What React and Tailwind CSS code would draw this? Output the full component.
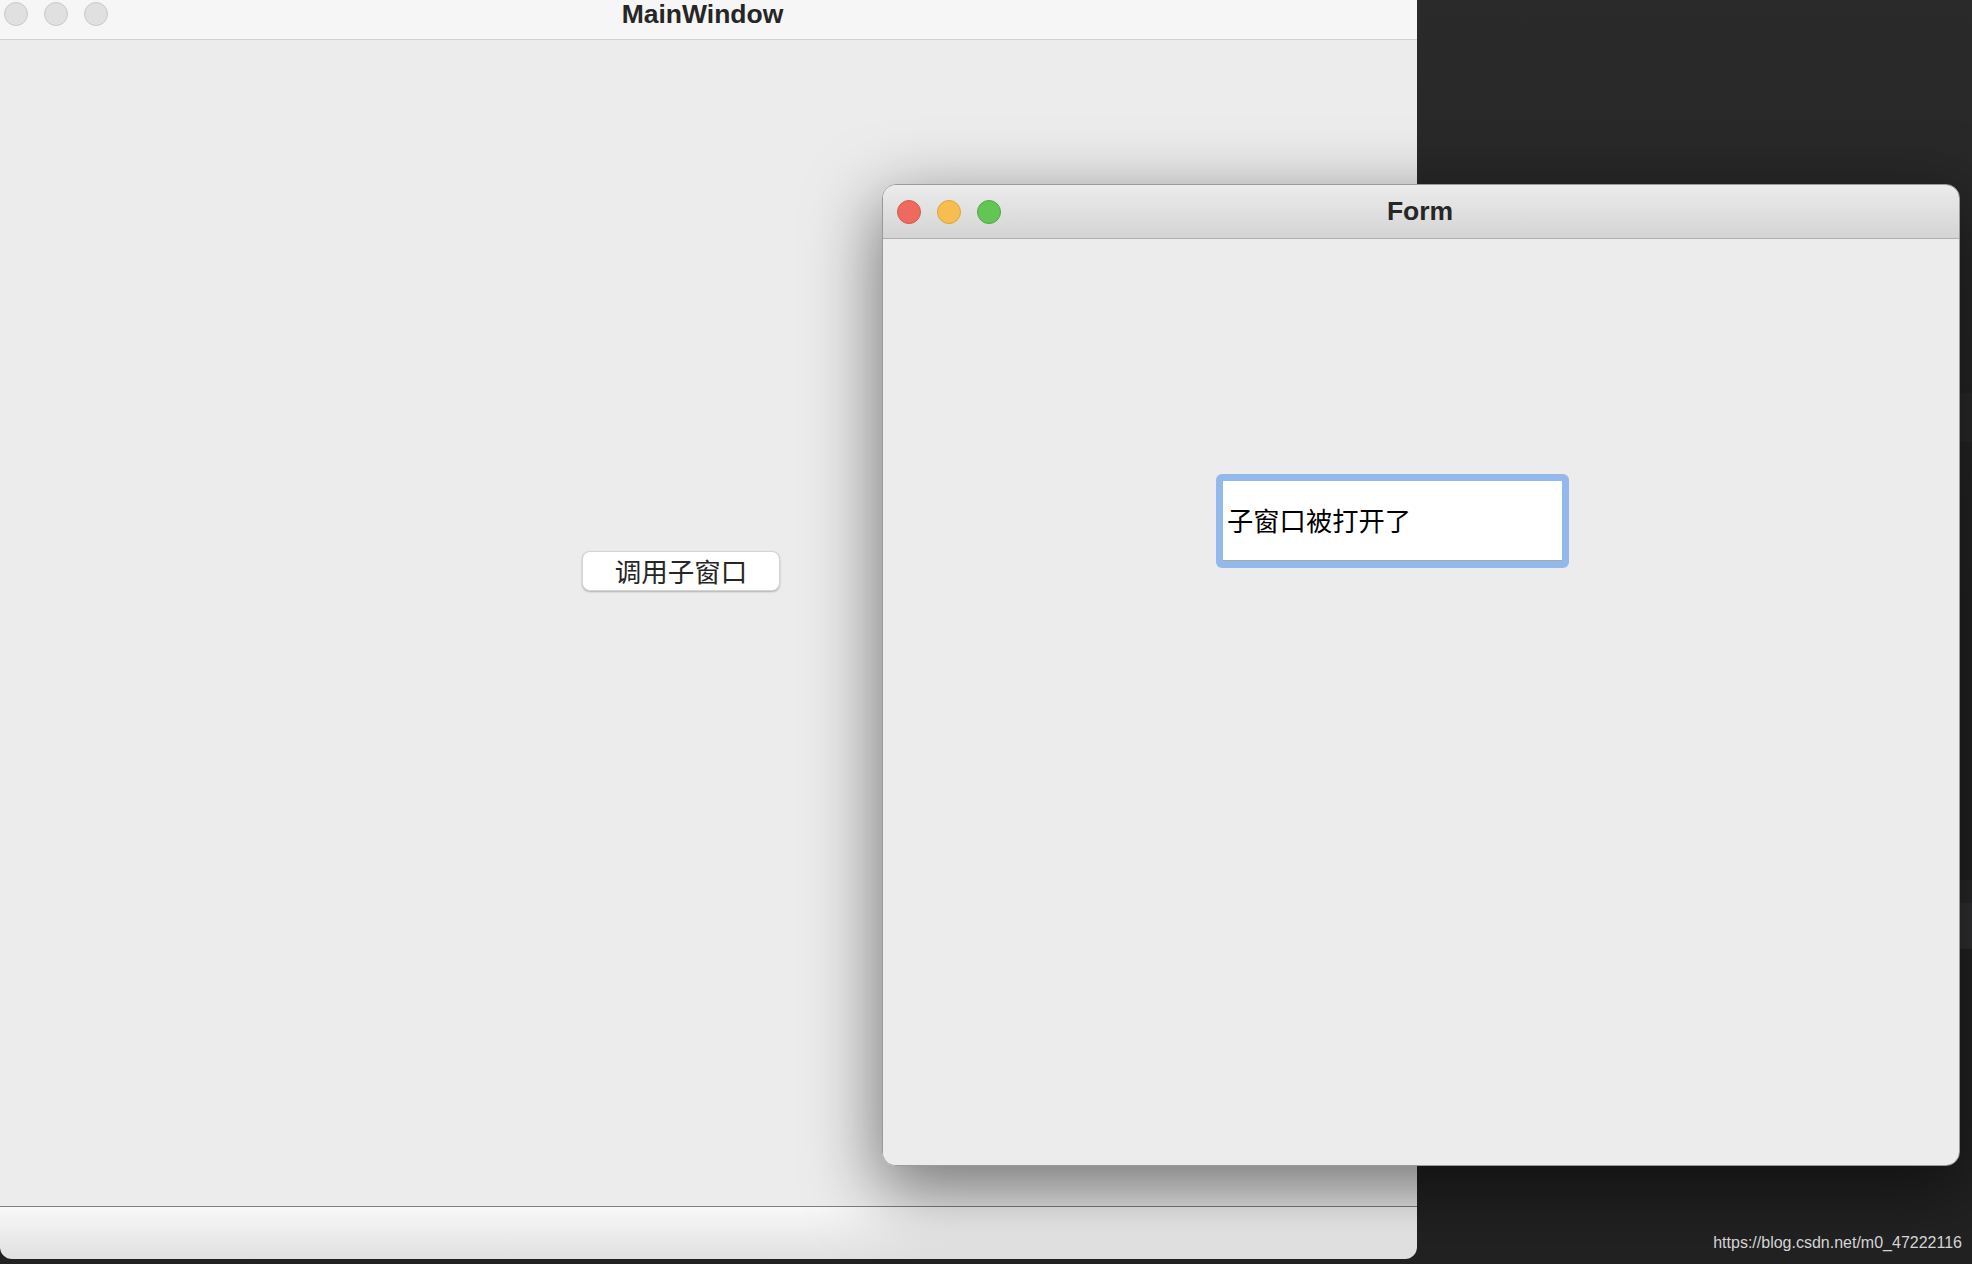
import React from "react";

const cjk = { fontFamily: '"Noto Sans CJK SC", "Liberation Sans", sans-serif' };
const sans = { fontFamily: '"Liberation Sans", "Noto Sans", sans-serif' };

const Light = ({ className }) => (
  <div className={`w-[24px] h-[24px] rounded-full border ${className}`} />
);

const MainWindow = () => {
  return (
    <div className="absolute left-0 top-0 w-[1417px] h-[1259px] flex flex-col rounded-b-[12px] overflow-hidden">
      {/* Title bar */}
      <div className="relative h-[40px] shrink-0 bg-[#f6f6f6] border-b border-[#d2d2d2]">
        <div className="flex items-center h-[28px] pl-[4px] gap-[16px]">
          <Light className="bg-[#e0e0e0] border-[#c9c9c9]" />
          <Light className="bg-[#e0e0e0] border-[#c9c9c9]" />
          <Light className="bg-[#e0e0e0] border-[#c9c9c9]" />
        </div>
        <div
          className="absolute left-0 right-0 top-0 h-[29px] flex items-center justify-center pr-[12px] text-[26.5px] leading-none font-bold text-[#262626]"
          style={sans}
        >
          MainWindow
        </div>
      </div>

      {/* Content */}
      <div className="flex-1 bg-[#ececec] pl-[582px] pt-[511px]">
        <button
          className="w-[198px] h-[40px] bg-white rounded-[8px] border border-[#d4d4d4] shadow-[0_1px_2px_rgba(0,0,0,0.25)] text-[26.5px] text-[#262626] flex items-center justify-center leading-none"
          style={cjk}
        >
          调用子窗口
        </button>
      </div>

      {/* Status bar */}
      <div className="h-[53px] shrink-0 border-t border-[#7f7f7f] bg-gradient-to-b from-[#f8f8f8] to-[#e1e1e1]" />
    </div>
  );
};

const FormWindow = () => {
  return (
    <div className="absolute left-[882px] top-[184px] w-[1078px] h-[982px] flex flex-col rounded-[14px] overflow-hidden border border-[#9a9a9a] shadow-[0_22px_70px_4px_rgba(0,0,0,0.5)]">
      {/* Title bar */}
      <div className="relative h-[54px] shrink-0 bg-gradient-to-b from-[#ececec] to-[#d4d4d4] border-b border-[#b0b0b0] flex items-center pl-[14px] gap-[16px]">
        <Light className="bg-[#ee6a5f] border-[#d4594d]" />
        <Light className="bg-[#f6be4f] border-[#dba43c]" />
        <Light className="bg-[#62c554] border-[#50a944]" />
        <div
          className="absolute inset-0 flex items-center justify-center pr-[2px] text-[26.5px] font-bold text-[#262626]"
          style={sans}
        >
          Form
        </div>
      </div>

      {/* Content */}
      <div className="flex-1 bg-[#ececec] pl-[333px] pt-[235px]">
        <div className="w-[353px] h-[94px] rounded-[6px] bg-[#93b9ec] p-[7px]">
          <div
            className="h-full bg-white border-b border-[#a8a8a8] flex items-center pl-[4px] text-[26.3px] text-black leading-none"
            style={cjk}
          >
            子窗口被打开了
          </div>
        </div>
      </div>
    </div>
  );
};

export default function App() {
  return (
    <div className="relative w-[1972px] h-[1264px] overflow-hidden bg-gradient-to-b from-[#2a2a2a] via-[#232323] to-[#222222]">
      {/* faint shapes of windows further back */}
      <div className="absolute left-[1958px] top-[393px] w-[14px] h-[49px] bg-[#2a2a2a]" />
      <div className="absolute left-[1958px] top-[880px] w-[14px] h-[23px] bg-[#29292a]" />
      <div className="absolute left-[1958px] top-[903px] w-[14px] h-[46px] bg-[#303132]" />

      <MainWindow />
      <FormWindow />

      <div
        className="absolute right-[10px] bottom-[9px] text-[16px] text-[#d4d4d4]"
        style={sans}
      >
        https://blog.csdn.net/m0_47222116
      </div>
    </div>
  );
}
